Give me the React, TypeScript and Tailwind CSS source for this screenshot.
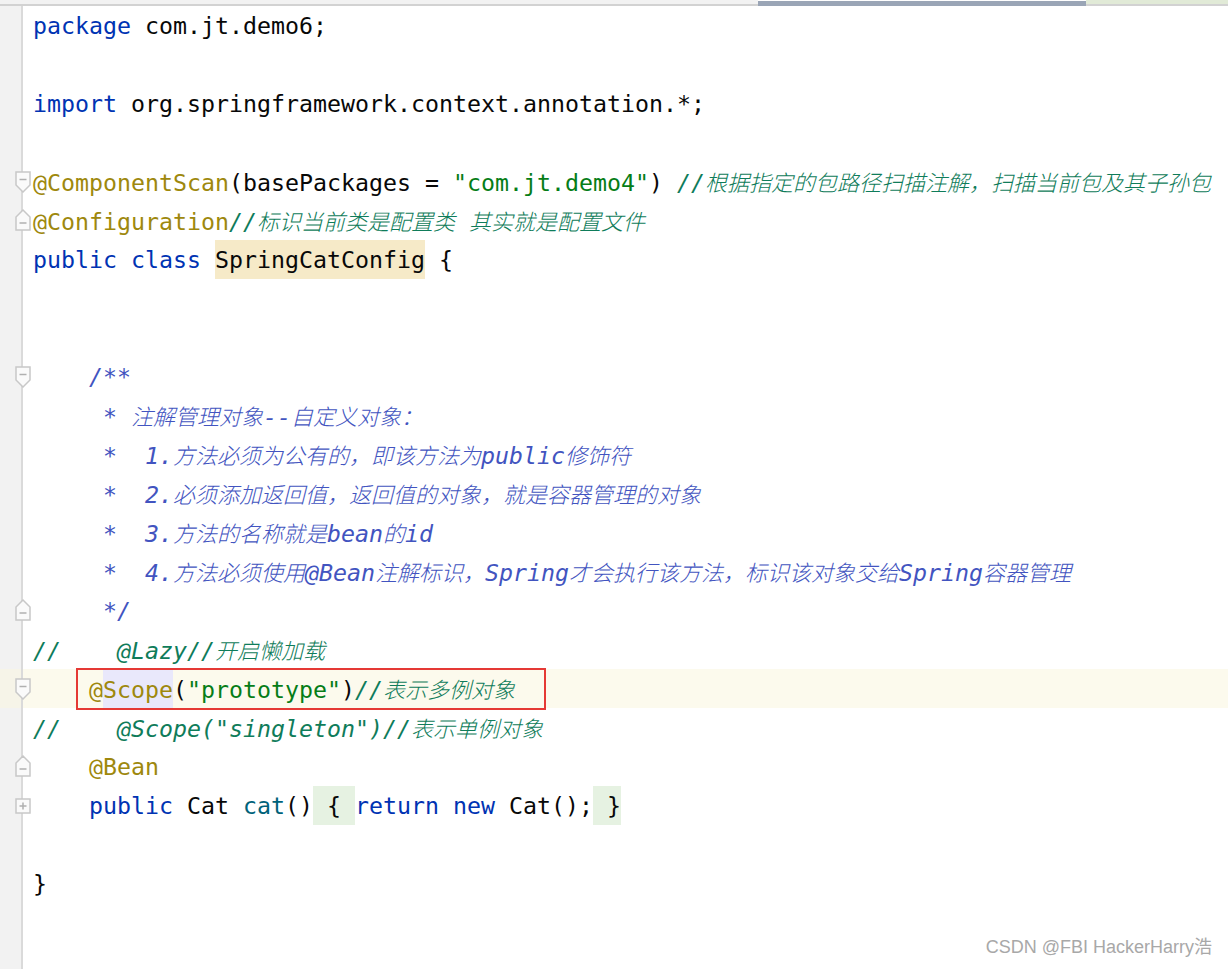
import React from "react";

type P = { children?: React.ReactNode };

const K = ({ children }: P) => <span className="text-[#0033b3]">{children}</span>;
const A = ({ children }: P) => <span className="text-[#9e880d]">{children}</span>;
const S = ({ children }: P) => <span className="text-[#067d17]">{children}</span>;
const M = ({ children }: P) => <span className="text-[#00627a]">{children}</span>;
const LC = ({ children }: P) => <span className="italic text-[#0f7c5a]">{children}</span>;
const DC = ({ children }: P) => <span className="italic text-[#4254c0]">{children}</span>;
const C = ({ children }: P) => (
  <span className="font-['Noto_Sans_CJK_SC','Noto_Sans_CJK_JP',sans-serif] font-light text-[22px]">{children}</span>
);

const FoldDown = () => (
  <svg width="16" height="22" viewBox="0 0 16 22" className="absolute left-[15px] top-[9px]">
    <path d="M1 1 H15 V14 L8 21 L1 14 Z" fill="#fafafa" stroke="#c8c8c8" strokeWidth="1.5" />
    <path d="M4.5 8.5 H11.5" stroke="#b0b0b0" strokeWidth="1.5" />
  </svg>
);
const FoldUp = () => (
  <svg width="16" height="22" viewBox="0 0 16 22" className="absolute left-[15px] top-[8px]">
    <path d="M8 1 L15 8 V21 H1 V8 Z" fill="#fafafa" stroke="#c8c8c8" strokeWidth="1.5" />
    <path d="M4.5 14 H11.5" stroke="#b0b0b0" strokeWidth="1.5" />
  </svg>
);
const FoldPlus = () => (
  <svg width="16" height="16" viewBox="0 0 16 16" className="absolute left-[15px] top-[12px]">
    <rect x="1" y="1" width="14" height="14" fill="#fafafa" stroke="#c8c8c8" strokeWidth="1.5" />
    <path d="M4.5 8 H11.5 M8 4.5 V11.5" stroke="#b0b0b0" strokeWidth="1.5" />
  </svg>
);

type Row = { content?: React.ReactNode; fold?: "down" | "up" | "plus"; current?: boolean; box?: boolean };

const rows: Row[] = [
  { content: <><K>package</K> com.jt.demo6;</> },
  {},
  { content: <><K>import</K> org.springframework.context.annotation.*;</> },
  {},
  {
    fold: "down",
    content: (
      <>
        <A>@ComponentScan</A>(basePackages = <S>"com.jt.demo4"</S>){" "}
        <LC>//<C>根据指定的包路径扫描注解，扫描当前包及其子孙包</C></LC>
      </>
    ),
  },
  {
    fold: "up",
    content: (
      <>
        <A>@Configuration</A>
        <LC>//<C>标识当前类是配置类</C> <C>其实就是配置文件</C></LC>
      </>
    ),
  },
  {
    content: (
      <>
        <K>public class</K> <span className="bg-[#f6eac8] inline-block h-[39px] leading-[39px]">SpringCatConfig</span> {"{"}
      </>
    ),
  },
  {},
  {},
  { fold: "down", content: <>{"    "}<DC>/**</DC></> },
  { content: <DC>{"     * "}<C>注解管理对象</C>--<C>自定义对象：</C></DC> },
  { content: <DC>{"     *  1."}<C>方法必须为公有的，即该方法为</C>public<C>修饰符</C></DC> },
  { content: <DC>{"     *  2."}<C>必须添加返回值，返回值的对象，就是容器管理的对象</C></DC> },
  { content: <DC>{"     *  3."}<C>方法的名称就是</C>bean<C>的</C>id</DC> },
  {
    content: (
      <DC>
        {"     *  4."}<C>方法必须使用</C>@Bean<C>注解标识，</C>Spring<C>才会执行该方法，标识该对象交给</C>Spring<C>容器管理</C>
      </DC>
    ),
  },
  { fold: "up", content: <DC>{"     */"}</DC> },
  { content: <LC>{"//    @Lazy//"}<C>开启懒加载</C></LC> },
  {
    fold: "down",
    current: true,
    box: true,
    content: (
      <>
        {"    "}
        <A>@<span className="bg-[#e9e8fb] inline-block h-[39px] leading-[39px]">Scope</span></A>(<S>"prototype"</S>)
        <LC>//<C>表示多例对象</C></LC>
      </>
    ),
  },
  { content: <LC>{'//    @Scope("singleton")//'}<C>表示单例对象</C></LC> },
  { fold: "up", content: <>{"    "}<A>@Bean</A></> },
  {
    fold: "plus",
    content: (
      <>
        {"    "}<K>public</K> Cat <M>cat</M>()
        <span className="bg-[#e6f2e2] inline-block h-[39px] leading-[39px]">{" { "}</span>
        <K>return</K> <K>new</K> Cat();
        <span className="bg-[#e6f2e2] inline-block h-[39px] leading-[39px]">{" }"}</span>
      </>
    ),
  },
  {},
  { content: <>{"}"}</> },
];

export default function App() {
  return (
    <div className="relative w-[1228px] h-[969px] bg-white flex flex-col overflow-hidden">
      {/* top strip */}
      <div className="flex h-[6px] shrink-0">
        <div className="w-[758px] bg-[#f2f2f2] border-b-2 border-[#d2d2d2]" />
        <div className="w-[328px] bg-[#9aa5b6] mt-px" />
        <div className="flex-1 bg-[#e1ead7] border-b-2 border-[#d2d2d2]" />
      </div>
      <div className="flex flex-col flex-1 font-['DejaVu_Sans_Mono','Noto_Sans_CJK_SC',monospace] text-[23.25px] text-[#080808]">
        {rows.map((r, i) => (
          <div key={i} className={`relative flex h-[39px] shrink-0 ${r.current ? "bg-[#fcfaed]" : ""}`}>
            <div
              className={`w-[23px] shrink-0 border-r-2 border-[#dadada] ${r.current ? "bg-[#f6f4e8]" : "bg-[#f2f2f2]"}`}
            />
            <div className="relative pl-[10px] whitespace-pre leading-[39px] h-[39px]">
              {r.content}
              {r.box && (
                <div className="absolute left-[53px] top-[-1px] w-[470px] h-[42px] border-2 border-[#e53935]" />
              )}
            </div>
            {r.fold === "down" && <FoldDown />}
            {r.fold === "up" && <FoldUp />}
            {r.fold === "plus" && <FoldPlus />}
          </div>
        ))}
        <div className="flex flex-1">
          <div className="w-[23px] shrink-0 bg-[#f2f2f2] border-r-2 border-[#dadada]" />
        </div>
      </div>
      <div className="absolute right-[16px] bottom-[8px] font-['Liberation_Sans','Noto_Sans_CJK_SC',sans-serif] text-[18px] text-[#a8a8a8]">
        CSDN @FBI HackerHarry浩
      </div>
    </div>
  );
}
